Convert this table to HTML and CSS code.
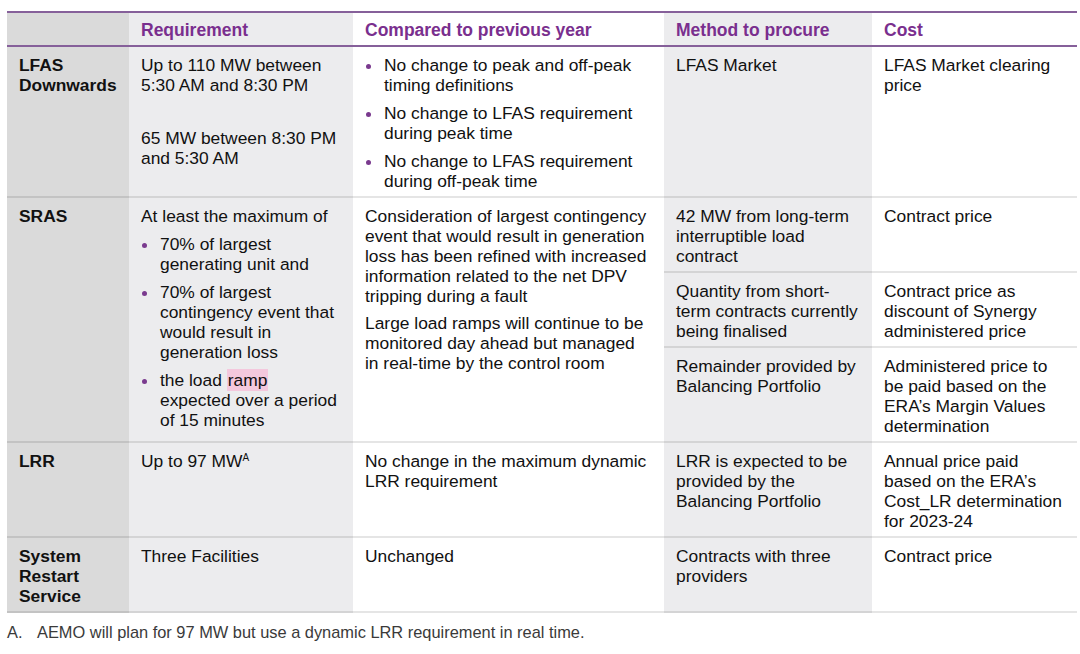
FILE: index.html
```html
<!DOCTYPE html>
<html lang="en">
<head>
<meta charset="utf-8">
<title>Essential System Services requirements</title>
<link rel="stylesheet" href="styles.css">
</head>
<body>
<main class="page">
  <table class="ess">
    <colgroup>
      <col class="c-label">
      <col class="c-req">
      <col class="c-cmp">
      <col class="c-method">
      <col class="c-cost">
    </colgroup>
    <thead>
      <tr>
        <th class="label"></th>
        <th class="req">Requirement</th>
        <th class="cmp">Compared to previous year</th>
        <th class="method">Method to procure</th>
        <th class="cost">Cost</th>
      </tr>
    </thead>
    <tbody>
      <tr>
        <th class="label">LFAS Downwards</th>
        <td class="req">
          <p>Up to 110 MW between 5:30 AM and 8:30 PM</p>
          <p class="spaced">65 MW between 8:30 PM and 5:30 AM</p>
        </td>
        <td class="cmp">
          <ul class="bullets">
            <li>No change to peak and off-peak timing definitions</li>
            <li>No change to LFAS requirement during peak time</li>
            <li>No change to LFAS requirement during off-peak time</li>
          </ul>
        </td>
        <td class="method">LFAS Market</td>
        <td class="cost">LFAS Market clearing price</td>
      </tr>
      <tr>
        <th class="label" rowspan="3">SRAS</th>
        <td class="req" rowspan="3">
          <p>At least the maximum of</p>
          <ul class="bullets">
            <li>70% of largest generating unit and</li>
            <li>70% of largest contingency event that would result in generation loss</li>
            <li><span>the load <mark class="hl">ramp</mark> expected over a period of 15 minutes</span></li>
          </ul>
        </td>
        <td class="cmp" rowspan="3">
          <p>Consideration of largest contingency event that would result in generation loss has been refined with increased information related to the net DPV tripping during a fault</p>
          <p class="next">Large load ramps will continue to be monitored day ahead but managed in real-time by the control room</p>
        </td>
        <td class="method">42 MW from long-term interruptible load contract</td>
        <td class="cost">Contract price</td>
      </tr>
      <tr>
        <td class="method">Quantity from short-term contracts currently being finalised</td>
        <td class="cost">Contract price as discount of Synergy administered price</td>
      </tr>
      <tr>
        <td class="method">Remainder provided by Balancing Portfolio</td>
        <td class="cost">Administered price to be paid based on the ERA’s Margin Values determination</td>
      </tr>
      <tr>
        <th class="label">LRR</th>
        <td class="req">Up to 97 MW<sup class="note">A</sup></td>
        <td class="cmp">No change in the maximum dynamic LRR requirement</td>
        <td class="method">LRR is expected to be provided by the Balancing Portfolio</td>
        <td class="cost">Annual price paid based on the ERA’s Cost_LR determination for 2023-24</td>
      </tr>
      <tr>
        <th class="label">System Restart Service</th>
        <td class="req">Three Facilities</td>
        <td class="cmp">Unchanged</td>
        <td class="method">Contracts with three providers</td>
        <td class="cost">Contract price</td>
      </tr>
    </tbody>
  </table>
  <p class="footnote"><span class="fn-key">A.</span><span>AEMO will plan for 97 MW but use a dynamic LRR requirement in real time.</span></p>
</main>
</body>
</html>
```

FILE: styles.css
```css
html, body {
  margin: 0;
  padding: 0;
  background: #ffffff;
}

body {
  font-family: "Liberation Sans", Arial, Helvetica, sans-serif;
  color: #111111;
}

.page {
  padding: 11px 0 0 7px;
}

.ess {
  width: 1070px;
  table-layout: fixed;
  border-collapse: separate;
  border-spacing: 0;
  font-size: 17.4px;
  line-height: 20px;
}

.c-label { width: 122px; }
.c-req { width: 224px; }
.c-cmp { width: 311px; }
.c-method { width: 208px; }
.c-cost { width: 205px; }

.ess th,
.ess td {
  text-align: left;
  vertical-align: top;
  padding: 8px 10px 5px 12px;
  border-bottom: 2px solid rgba(0, 0, 0, 0.1);
}

.ess thead th {
  color: #7a2f8e;
  font-weight: bold;
  font-size: 17.5px;
  padding-top: 7px;
  padding-bottom: 5px;
  border-top: 2px solid #86609a;
  border-bottom: 2px solid #86609a;
}

.ess tbody th {
  font-weight: bold;
  color: #111111;
}

.label { background: #dadada; }
.req { background: #ececee; }
.cmp { background: #ffffff; }
.method { background: #ececee; }
.cost { background: #ffffff; }

.ess td.cmp { padding-right: 13px; }

.ess p {
  margin: 0;
}

.ess p.spaced {
  margin-top: 33px;
}

.ess p.next {
  margin-top: 7px;
}

.bullets {
  list-style: none;
  margin: 0;
  padding: 0;
}

.bullets li {
  display: flex;
  margin-top: 8px;
}

.cmp > .bullets > li:first-child {
  margin-top: 0;
}

.bullets li::before {
  content: "";
  flex: none;
  width: 5px;
  height: 5px;
  border-radius: 50%;
  background: #7a3a8e;
  margin: 9px 13px 0 1px;
}

.hl {
  background: #f4c8dd;
  color: inherit;
  padding: 1px 1px;
}

.note {
  font-size: 10px;
  line-height: 0;
  vertical-align: 6px;
}

.footnote {
  display: flex;
  margin: 9px 0 0 0;
  font-size: 16.4px;
  line-height: 20px;
  color: #3a3a3a;
}

.fn-key {
  width: 30px;
  flex: none;
}
```
